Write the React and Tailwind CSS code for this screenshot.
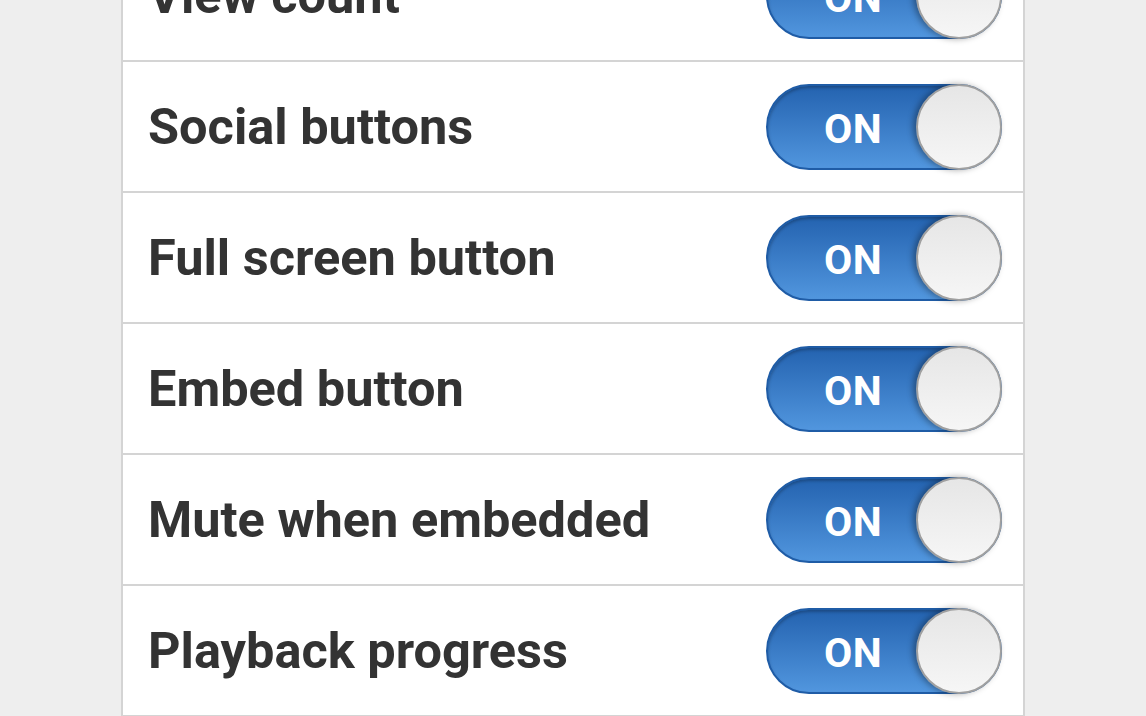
import React from "react";

const rows = [
  "View count",
  "Social buttons",
  "Full screen button",
  "Embed button",
  "Mute when embedded",
  "Playback progress",
];

function Toggle() {
  return (
    <div className="relative h-[86px] w-[236px] shrink-0">
      <div className="absolute inset-0 rounded-full border-2 border-[#1f5ca6] bg-gradient-to-b from-[#2463b0] to-[#5196de] shadow-[inset_0_2px_3px_rgba(0,0,0,0.25)]">
        <span className="absolute left-[56px] top-[23px] text-[41px] font-bold leading-none tracking-[0.5px] text-white [font-family:Roboto,'Liberation_Sans',sans-serif]">
          ON
        </span>
      </div>
      <div className="absolute right-0 top-0 h-[86px] w-[86px] rounded-full border-2 border-[#a0a0a0] bg-gradient-to-b from-[#e6e6e6] to-[#f6f6f6] shadow-[-3px_0_6px_rgba(0,0,0,0.35)]" />
    </div>
  );
}

export default function App() {
  return (
    <div className="h-[716px] w-[1146px] overflow-hidden bg-[#eeeeee]">
      <div className="ml-[121px] mt-[-69px] w-[904px] border-x-2 border-[#d4d4d4] bg-white">
        {rows.map((r) => (
          <div
            key={r}
            className="flex h-[131px] items-center justify-between border-b-2 border-[#d4d4d4] pl-[25px] pr-[21px]"
          >
            <span className="text-[50.5px] font-bold text-[#333333] [font-family:Roboto,'Liberation_Sans',sans-serif]">
              {r}
            </span>
            <Toggle />
          </div>
        ))}
      </div>
    </div>
  );
}
